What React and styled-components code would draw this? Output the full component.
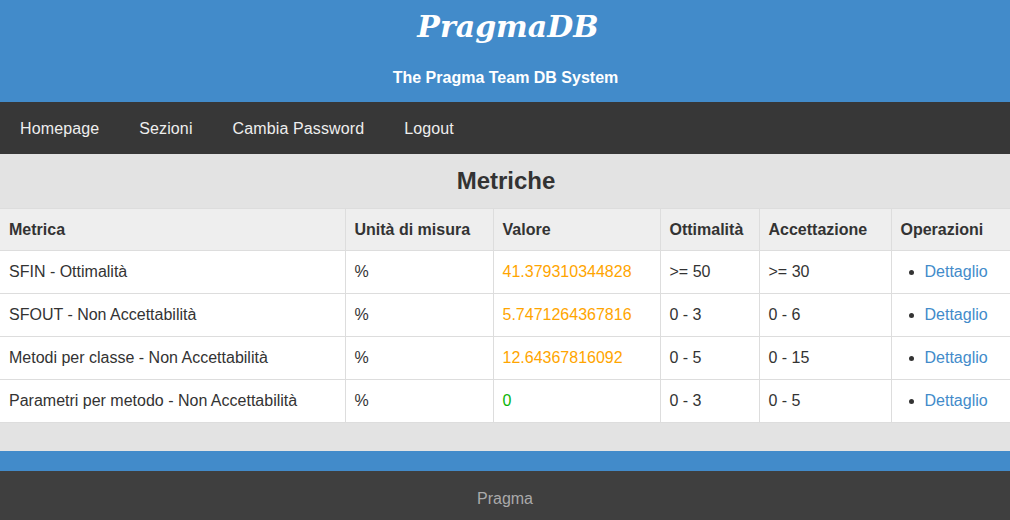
import React from 'react';
import styled, { createGlobalStyle } from "styled-components";

const Global = createGlobalStyle`
  body {
    margin: 0;
    font-family: 'Liberation Sans', Arial, sans-serif;
    background: #e3e3e3;
  }
`;

const Header = styled.header`
  background: #428bca;
  height: 102px;
  color: #fff;
  text-align: center;
  overflow: hidden;
  h1 {
    margin: 7px 0 0;
    padding-left: 6px;
    font-family: 'DejaVu Serif', serif;
    font-style: italic;
    font-weight: bold;
    font-size: 30px;
    line-height: 40px;
  }
  h2 {
    margin: 21px 0 0;
    padding-left: 1px;
    font-size: 16px;
    font-weight: bold;
    line-height: 20px;
  }
`;

const Nav = styled.nav`
  background: #373737;
  height: 52px;
  display: flex;
  align-items: center;
  padding: 1px 0 0 20px;
  box-sizing: border-box;
  gap: 40px;
  a {
    color: #eee;
    font-size: 16px;
    letter-spacing: 0.12px;
    text-decoration: none;
  }
`;

const Main = styled.main`
  background: #e3e3e3;
  height: 296px;
  padding-top: 1px;
  h3 {
    margin: 11px 0 0;
    padding-left: 2px;
    text-align: center;
    font-size: 24px;
    line-height: 30px;
    color: #333;
  }
`;

const Table = styled.table`
  margin-top: 12px;
  width: 100%;
  table-layout: fixed;
  border-collapse: collapse;
  background: #fff;
  color: #333;
  font-size: 16px;
  th, td {
    border: 1px solid #ddd;
    text-align: left;
    padding: 0 9px;
    height: 42px;
  }
  th {
    height: 41px;
    background: #eee;
    font-weight: bold;
  }
  tr > :first-child { border-left: none; }
  tr > :last-child { border-right: none; }
`;

const Col = styled.col`
  width: ${p => (p.$w ? `${p.$w}px` : 'auto')};
`;

const Value = styled.td`
  && { color: ${p => (p.$ok ? '#09b509' : '#ffa500')}; }
`;

const Ops = styled.ul`
  margin: 0;
  padding-left: 24px;
  li::marker { color: #333; }
  a {
    color: #428bca;
    text-decoration: none;
  }
`;

const Strip = styled.div`
  background: #428bca;
  height: 20px;
`;

const Footer = styled.footer`
  background: #3f3f3f;
  height: 49px;
  box-sizing: border-box;
  padding-top: 6px;
  display: flex;
  align-items: center;
  justify-content: center;
  color: #aaa;
  font-size: 16px;
`;

const cols = [345, 148, 167, 99, 132, 0];

const rows = [
  ['SFIN - Ottimalità', '%', '41.379310344828', '>= 50', '>= 30'],
  ['SFOUT - Non Accettabilità', '%', '5.7471264367816', '0 - 3', '0 - 6'],
  ['Metodi per classe - Non Accettabilità', '%', '12.64367816092', '0 - 5', '0 - 15'],
  ['Parametri per metodo - Non Accettabilità', '%', '0', '0 - 3', '0 - 5'],
];

const App = () => {
  return (
    <>
      <Global />
      <Header>
        <h1>PragmaDB</h1>
        <h2>The Pragma Team DB System</h2>
      </Header>
      <Nav>
        <a href="#">Homepage</a>
        <a href="#">Sezioni</a>
        <a href="#">Cambia Password</a>
        <a href="#">Logout</a>
      </Nav>
      <Main>
        <h3>Metriche</h3>
        <Table>
          <colgroup>
            {cols.map((w, i) => <Col key={i} $w={w} />)}
          </colgroup>
          <thead>
            <tr>
              <th>Metrica</th>
              <th>Unità di misura</th>
              <th>Valore</th>
              <th>Ottimalità</th>
              <th>Accettazione</th>
              <th>Operazioni</th>
            </tr>
          </thead>
          <tbody>
            {rows.map(r => (
              <tr key={r[0]}>
                <td>{r[0]}</td>
                <td>{r[1]}</td>
                <Value $ok={r[2] === '0'}>{r[2]}</Value>
                <td>{r[3]}</td>
                <td>{r[4]}</td>
                <td>
                  <Ops><li><a href="#">Dettaglio</a></li></Ops>
                </td>
              </tr>
            ))}
          </tbody>
        </Table>
      </Main>
      <Strip />
      <Footer>Pragma</Footer>
    </>
  );
};

export default App;
